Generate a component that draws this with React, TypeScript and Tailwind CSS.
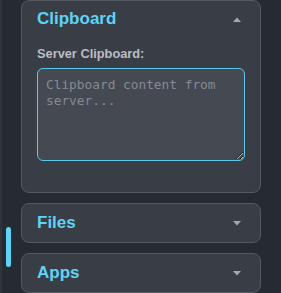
const sans = "font-['Liberation_Sans',Arial,sans-serif]";

function Caret({ up }: { up?: boolean }) {
  return (
    <svg width="8" height="5" viewBox="0 0 8 5" className="shrink-0">
      <polygon
        points={up ? "0,5 8,5 4,0.5" : "0,0 8,0 4,4.5"}
        fill="#a3a7ae"
      />
    </svg>
  );
}

function Section({ title }: { title: string }) {
  return (
    <div className="flex h-[40px] items-center justify-between rounded-[8px] border border-[#555962] bg-[#393d46] pl-[15px] pr-[19px]">
      <span className={`${sans} text-[17px] font-bold leading-[20px] text-[#5fd3f5]`}>
        {title}
      </span>
      <Caret />
    </div>
  );
}

export default function App() {
  return (
    <div className="flex h-[293px] w-[281px] overflow-hidden bg-[#262a31]">
      <div className="w-[2px] shrink-0 bg-[#31343a]" />
      <div className="w-[19px] shrink-0 pl-[4px] pt-[227px]">
        <div className="h-[40px] w-[5px] rounded-full bg-[#5fd3f5]" />
      </div>
      <div className="flex w-[240px] shrink-0 flex-col gap-[10px]">
        <div className="rounded-[8px] border border-[#555962] bg-[#393d46] px-[15px] pb-[31px] pt-[8px]">
          <div className="flex h-[20px] items-center justify-between pr-[4px]">
            <span className={`${sans} text-[17px] font-bold leading-[20px] text-[#5fd3f5]`}>
              Clipboard
            </span>
            <Caret up />
          </div>
          <div className={`${sans} mt-[17px] text-[12.8px] font-bold leading-[16px] text-[#b9bdc4]`}>
            Server Clipboard:
          </div>
          <textarea
            className="mt-[6px] block h-[93px] w-full rounded-[6px] border border-[#5cc9ec] bg-[#454952] px-[8px] py-[8px] font-['DejaVu_Sans_Mono',monospace] text-[12.8px] leading-[16px] text-[#d0d3d8] outline-none placeholder:text-[#868a92]"
            placeholder="Clipboard content from server..."
          />
        </div>
        <Section title="Files" />
        <Section title="Apps" />
      </div>
      <div className="flex-1" />
    </div>
  );
}
